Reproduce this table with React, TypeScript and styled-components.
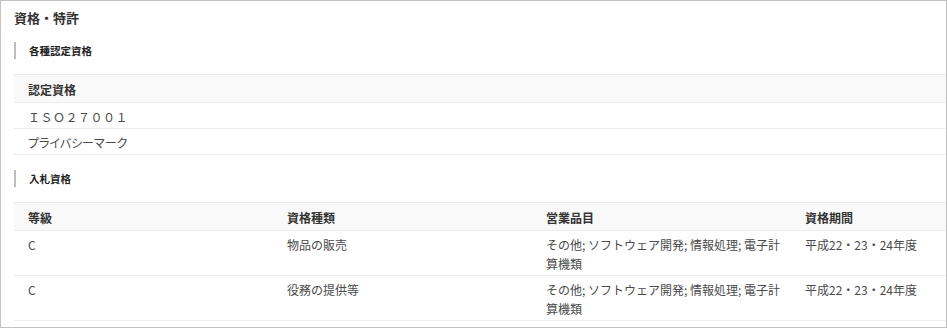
import React from "react";
import styled, { createGlobalStyle } from "styled-components";

const GlobalStyle = createGlobalStyle`
  html, body {
    margin: 0;
    padding: 0;
    background: #fff;
  }
  body {
    font-family: "Noto Sans CJK JP", "Noto Sans", sans-serif;
    color: #444;
  }
`;

const Page = styled.section`
  box-sizing: border-box;
  width: 947px;
  height: 328px;
  border: 1px solid #c2c2c2;
  padding: 7px 0 0 13px;
  overflow: hidden;
`;

const Title = styled.h2`
  margin: 0;
  font-size: 13px;
  line-height: 20px;
  font-weight: 700;
  color: #333;
`;

const SectionLabel = styled.h3`
  margin: 14px 0 0;
  border-left: 2px solid #bdbdbd;
  padding-left: 13px;
  height: 17px;
  font-size: 10.5px;
  line-height: 18px;
  font-weight: 700;
  color: #222;

  & + & {
    margin-top: 15px;
  }
`;

const Table = styled.div<{ $cols: string }>`
  margin-top: 15px;
  margin-bottom: 15px;
  display: grid;
  grid-template-columns: ${(p) => p.$cols};
`;

const HeadCell = styled.div`
  background: #f9f9f9;
  border-top: 1px solid #ececec;
  border-bottom: 1px solid #ececec;
  padding: 5px 8px 3px 14px;
  font-size: 12px;
  line-height: 19px;
  font-weight: 700;
  color: #333;
`;

const Cell = styled.div<{ $spacing?: number; $tight?: boolean }>`
  border-bottom: 1px solid #ececec;
  padding: 4px 10px 2px 14px;
  font-size: 12px;
  line-height: 19px;
  color: #4a4a4a;
  font-feature-settings: ${(p) => (p.$tight ? '"palt"' : "normal")};
  letter-spacing: ${(p) => p.$spacing ?? 0}px;
`;

const certs = [
  { name: "ＩＳＯ２７００１", spacing: 0.5, tight: false },
  { name: "プライバシーマーク", spacing: 0, tight: true },
];

const bids = [
  {
    grade: "C",
    kind: "物品の販売",
    items: "その他; ソフトウェア開発; 情報処理; 電子計算機類",
    period: "平成22・23・24年度",
  },
  {
    grade: "C",
    kind: "役務の提供等",
    items: "その他; ソフトウェア開発; 情報処理; 電子計算機類",
    period: "平成22・23・24年度",
  },
];

function App() {
  return (
    <>
      <GlobalStyle />
      <Page>
        <Title>資格・特許</Title>

        <SectionLabel>各種認定資格</SectionLabel>
        <Table $cols="1fr">
          <HeadCell>認定資格</HeadCell>
          {certs.map((c) => (
            <Cell key={c.name} $spacing={c.spacing} $tight={c.tight}>
              {c.name}
            </Cell>
          ))}
        </Table>

        <SectionLabel>入札資格</SectionLabel>
        <Table $cols="259px 259px 259px 1fr">
          <HeadCell>等級</HeadCell>
          <HeadCell>資格種類</HeadCell>
          <HeadCell>営業品目</HeadCell>
          <HeadCell>資格期間</HeadCell>
          {bids.map((b, i) => (
            <React.Fragment key={i}>
              <Cell>{b.grade}</Cell>
              <Cell>{b.kind}</Cell>
              <Cell>{b.items}</Cell>
              <Cell>{b.period}</Cell>
            </React.Fragment>
          ))}
        </Table>
      </Page>
    </>
  );
}

export default App;
